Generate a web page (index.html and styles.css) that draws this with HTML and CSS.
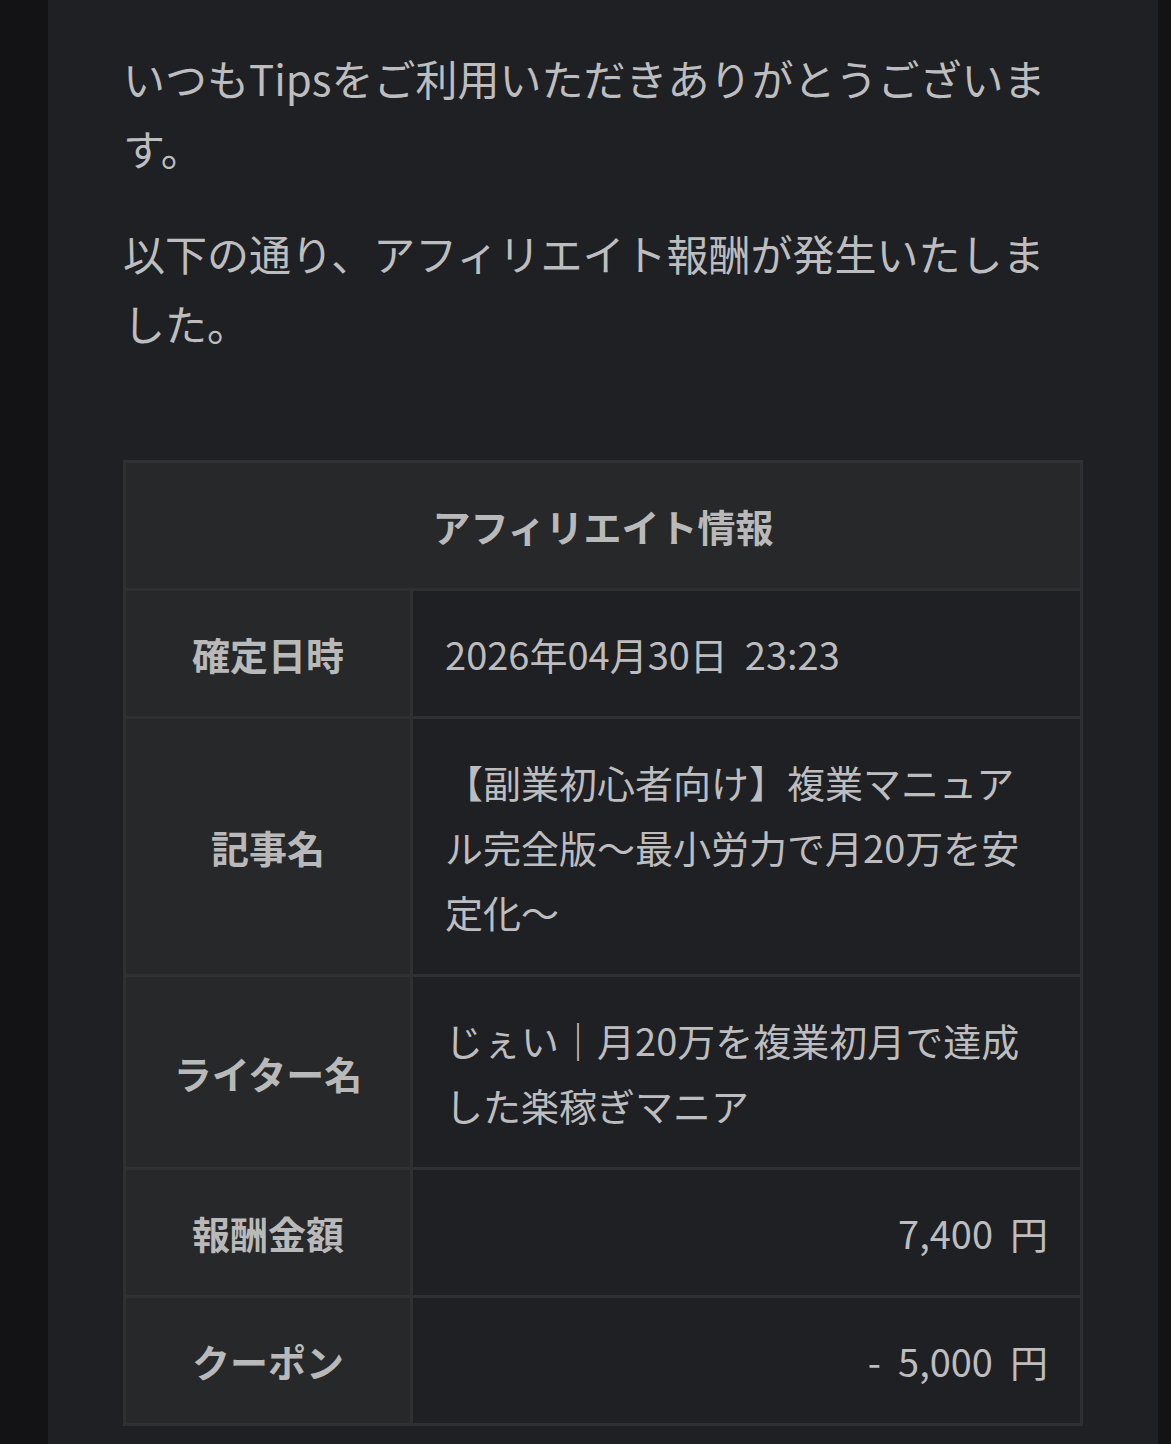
FILE: index.html
```html
<!DOCTYPE html>
<html lang="ja">
<head>
    <meta charset="UTF-8">
    <meta name="viewport" content="width=device-width, initial-scale=1.0">
    <title>アフィリエイト報酬のお知らせ</title>
    <link rel="stylesheet" href="styles.css">
</head>
<body>
    <div class="mail">
        <p class="mail-text">いつもTipsをご利用いただきありがとうございます。</p>
        <p class="mail-text">以下の通り、アフィリエイト報酬が発生いたしました。</p>

        <table class="info-table">
            <tr>
                <th class="info-head" colspan="2">アフィリエイト情報</th>
            </tr>
            <tr>
                <th class="info-label">確定日時</th>
                <td class="info-value">2026年04月30日&nbsp; 23:23</td>
            </tr>
            <tr>
                <th class="info-label">記事名</th>
                <td class="info-value">【副業初心者向け】複業マニュアル完全版〜最小労力で月20万を安定化〜</td>
            </tr>
            <tr>
                <th class="info-label">ライター名</th>
                <td class="info-value">じぇい｜月20万を複業初月で達成した楽稼ぎマニア</td>
            </tr>
            <tr>
                <th class="info-label">報酬金額</th>
                <td class="info-value amount">7,400&nbsp; 円</td>
            </tr>
            <tr>
                <th class="info-label">クーポン</th>
                <td class="info-value amount">-&nbsp; 5,000&nbsp; 円</td>
            </tr>
        </table>
    </div>
</body>
</html>
```

FILE: styles.css
```css
/* メール本文（ダークモード） */
body {
    margin: 0;
    background-color: #131315;
    font-family: "Noto Sans CJK JP", "Noto Sans", sans-serif;
    color: #bdbdbf;
}

.mail {
    margin-left: 48px;
    width: 1110px;
    min-height: 1444px;
    box-sizing: border-box;
    padding: 43px 75px 0;
    background-color: #1f2023;
}

.mail-text {
    margin: 0 0 35px;
    font-size: 42px;
    line-height: 70px;
}

.info-table {
    margin-top: 102px;
    width: 960px;
    border-collapse: collapse;
    border: 3px solid #2e3032;
    font-size: 38px;
    line-height: 65px;
}

.info-table th,
.info-table td {
    border: 3px solid #2e3032;
    padding: 30px 32px;
}

.info-head {
    background-color: #262829;
    color: #b9b9ba;
    font-weight: bold;
    text-align: center;
}

.info-label {
    width: 30%;
    box-sizing: border-box;
    background-color: #262829;
    color: #b9b9ba;
    font-weight: bold;
    text-align: center;
}

.info-value {
    padding-left: 30px;
    background-color: #1f2023;
    color: #bdbdbf;
    text-align: left;
}

.info-value.amount {
    text-align: right;
}
```
